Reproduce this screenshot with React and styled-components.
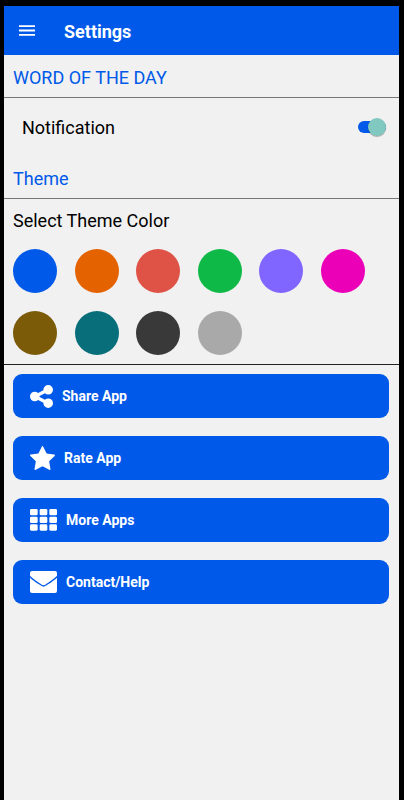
import React, { useState } from "react";
import styled, { createGlobalStyle } from "styled-components";

const COLORS = [
  { name: "Blue", value: "#0059e8" },
  { name: "Orange", value: "#e46300" },
  { name: "Red", value: "#df5246" },
  { name: "Green", value: "#0fb947" },
  { name: "Purple", value: "#8066ff" },
  { name: "Pink", value: "#eb00b8" },
  { name: "Brown", value: "#7b5b08" },
  { name: "Teal", value: "#086e7a" },
  { name: "Charcoal", value: "#393939" },
  { name: "Gray", value: "#a9a9a9" },
];

function MenuIcon() {
  return (
    <svg width="16" height="11" viewBox="0 0 18 12" fill="currentColor" aria-hidden="true">
      <path d="M0 0h18v2H0zM0 5h18v2H0zM0 10h18v2H0z" />
    </svg>
  );
}

function ShareIcon() {
  return (
    <svg width="23" height="23" viewBox="128 128 1536 1536" fill="currentColor" aria-hidden="true">
      <path d="M1344 1024q133 0 226.500 93.500t93.500 226.500-93.500 226.500-226.500 93.500-226.500-93.500-93.500-226.500q0-12 2-34l-360-180q-92 86-218 86-133 0-226.500-93.500t-93.500-226.500 93.500-226.500 226.500-93.500q126 0 218 86l360-180q-2-22-2-34 0-133 93.500-226.500t226.500-93.500 226.500 93.500 93.500 226.500-93.500 226.500-226.500 93.500q-126 0-218-86l-360 180q2 22 2 34t-2 34l360 180q92-86 218-86z" />
    </svg>
  );
}

function StarIcon() {
  return (
    <svg width="25" height="24" viewBox="64 32 1664 1588" fill="currentColor" aria-hidden="true">
      <path d="M1728 647q0 22-26 48l-363 354 86 500q1 7 1 20 0 21-10.500 35.500t-30.500 14.500q-19 0-40-12l-449-236-449 236q-22 12-40 12-21 0-31.500-14.500t-10.500-35.500q0-6 2-20l86-500-364-354q-25-27-25-48 0-37 56-46l502-73 225-455q19-41 49-41t49 41l225 455 502 73q56 9 56 46z" />
    </svg>
  );
}

function GridIcon() {
  return (
    <svg width="27" height="22" viewBox="0 0 81 66" fill="currentColor" aria-hidden="true">
      {[0, 23, 46].map((y) =>
        [0, 29, 58].map((x) => (
          <rect key={`${x}-${y}`} x={x} y={y} width="23" height="19" rx="4" />
        ))
      )}
    </svg>
  );
}

function MailIcon() {
  return (
    <svg width="27" height="22" viewBox="0 0 81 66" fill="currentColor" aria-hidden="true">
      <mask id="flap">
        <rect width="81" height="66" rx="6" fill="#fff" />
        <path
          d="M-2 15Q5 24 29 39Q37 45 40.500 45Q44 45 52 39Q76 24 83 15"
          fill="none"
          stroke="#000"
          strokeWidth="4"
        />
      </mask>
      <rect width="81" height="66" mask="url(#flap)" />
    </svg>
  );
}

const ACTIONS = [
  { label: "Share App", Icon: ShareIcon },
  { label: "Rate App", Icon: StarIcon },
  { label: "More Apps", Icon: GridIcon },
  { label: "Contact/Help", Icon: MailIcon },
];

function App() {
  const [notify, setNotify] = useState(true);
  const [theme, setTheme] = useState(COLORS[0].value);

  return (
    <Screen>
      <GlobalStyle />
      <Header $color={theme}>
        <MenuButton aria-label="Menu">
          <MenuIcon />
        </MenuButton>
        <Title>Settings</Title>
      </Header>
      <Content>
        <SectionTitle $color={theme}>WORD OF THE DAY</SectionTitle>
        <SettingRow>
          <label htmlFor="notification">Notification</label>
          <Switch
            id="notification"
            type="checkbox"
            role="switch"
            $color={theme}
            checked={notify}
            onChange={(e) => setNotify(e.target.checked)}
          />
        </SettingRow>
        <SectionTitle $color={theme}>Theme</SectionTitle>
        <ThemePicker>
          <PickerLabel>Select Theme Color</PickerLabel>
          <Swatches>
            {COLORS.map((color) => (
              <Swatch
                key={color.value}
                type="radio"
                name="theme"
                aria-label={color.name}
                $color={color.value}
                checked={theme === color.value}
                onChange={() => setTheme(color.value)}
              />
            ))}
          </Swatches>
        </ThemePicker>
        <Actions>
          {ACTIONS.map(({ label, Icon }) => (
            <ActionButton key={label} $color={theme}>
              <Icon />
              {label}
            </ActionButton>
          ))}
        </Actions>
      </Content>
    </Screen>
  );
}

const GlobalStyle = createGlobalStyle`
  * {
    box-sizing: border-box;
  }
  body {
    margin: 0;
    background: #000;
    font-family: Roboto, "Liberation Sans", sans-serif;
  }
`;

const Screen = styled.div`
  min-height: 100vh;
  padding: 6px 5px 0 4px;
  display: flex;
  flex-direction: column;
`;

const Header = styled.header`
  height: 49px;
  padding: 0 15px;
  display: flex;
  align-items: center;
  gap: 29px;
  color: white;
  background: ${(props) => props.$color};
`;

const MenuButton = styled.button`
  display: flex;
  padding: 0;
  border: none;
  color: inherit;
  background: none;
`;

const Title = styled.h1`
  margin: 0;
  padding-top: 2px;
  font-size: 18px;
  font-weight: bold;
`;

const Content = styled.main`
  flex: 1;
  background: #f1f1f1;
`;

const SectionTitle = styled.h2`
  margin: 0;
  padding: 11px 9px 7px;
  border-bottom: 1px solid #777;
  font-size: 18px;
  line-height: 24px;
  font-weight: normal;
  color: ${(props) => props.$color};
`;

const SettingRow = styled.div`
  height: 58px;
  padding: 0 13px 0 18px;
  display: flex;
  align-items: center;
  justify-content: space-between;
  font-size: 18px;
`;

const Switch = styled.input`
  appearance: none;
  width: 28px;
  height: 12px;
  margin: 0;
  display: flex;
  align-items: center;
  justify-content: ${(props) => (props.checked ? "flex-end" : "flex-start")};
  border-radius: 6px;
  background: ${(props) => (props.checked ? props.$color : "#b0b0b0")};

  &::before {
    content: "";
    flex: none;
    width: 18px;
    height: 18px;
    border-radius: 50%;
    background: #80c8c0;
    box-shadow: 0 1px 1px rgba(0, 0, 0, 0.3);
  }
`;

const ThemePicker = styled.fieldset`
  margin: 0;
  padding: 10px 34px 9px 9px;
  border: none;
  border-bottom: 1px solid #222;
`;

const PickerLabel = styled.legend`
  float: left;
  width: 100%;
  margin-bottom: 16px;
  padding: 0;
  font-size: 18px;
  line-height: 24px;
`;

const Swatches = styled.div`
  clear: both;
  display: grid;
  grid-template-columns: repeat(6, 44px);
  justify-content: space-between;
  row-gap: 18px;
`;

const Swatch = styled.input`
  appearance: none;
  width: 44px;
  height: 44px;
  margin: 0;
  border-radius: 50%;
  background: ${(props) => props.$color};
`;

const Actions = styled.div`
  padding: 9px 10px 9px 9px;
  display: flex;
  flex-direction: column;
  gap: 18px;
`;

const ActionButton = styled.button`
  height: 44px;
  padding: 0 17px;
  display: flex;
  align-items: center;
  gap: 9px;
  border: none;
  border-radius: 9px;
  font-family: inherit;
  font-size: 14px;
  font-weight: bold;
  color: white;
  background: ${(props) => props.$color};
`;

export default App;
